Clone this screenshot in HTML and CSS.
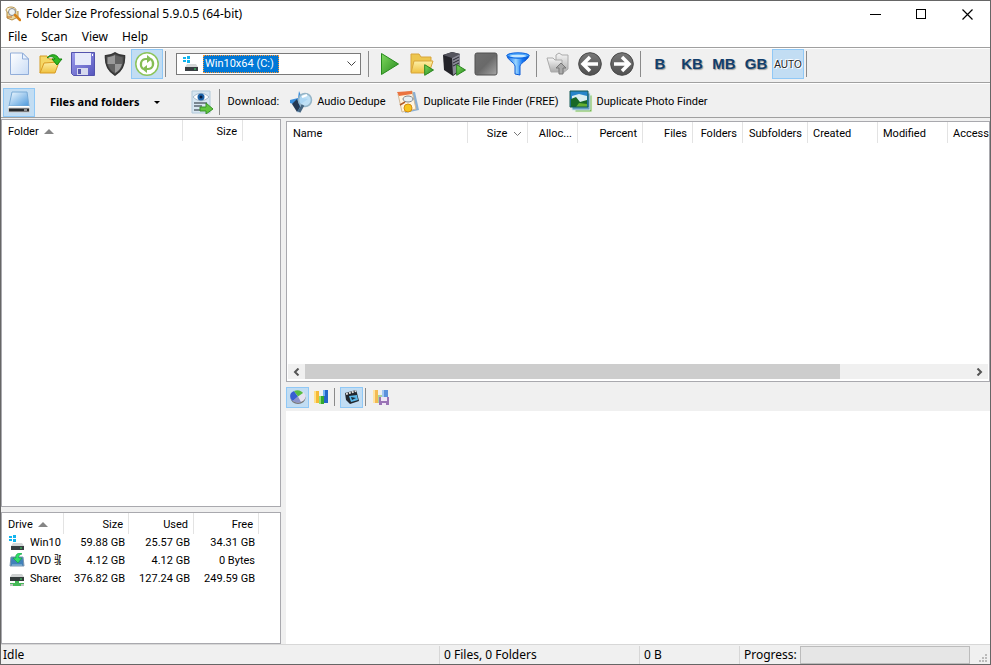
FILE: index.html
```html
<!DOCTYPE html>
<html lang="en">
<head>
<meta charset="utf-8">
<title>Folder Size Professional 5.9.0.5 (64-bit)</title>
<link rel="stylesheet" href="styles.css">
</head>
<body>
<svg class="defs" aria-hidden="true">
  <defs>
    <linearGradient id="paper" x1="0" y1="0" x2="1" y2="1"><stop offset="0" stop-color="#fff"/><stop offset="1" stop-color="#c9dcf6"/></linearGradient>
    <linearGradient id="gold" x1="0" y1="0" x2="0" y2="1"><stop offset="0" stop-color="#fdf0a8"/><stop offset="1" stop-color="#efc13f"/></linearGradient>
    <linearGradient id="green" x1="0" y1="0" x2="1" y2="1"><stop offset="0" stop-color="#7fd95f"/><stop offset="1" stop-color="#25891c"/></linearGradient>
    <linearGradient id="purple" x1="0" y1="0" x2="1" y2="1"><stop offset="0" stop-color="#9c9cec"/><stop offset="1" stop-color="#5656bd"/></linearGradient>
    <linearGradient id="blue" x1="0" y1="0" x2="1" y2="1"><stop offset="0" stop-color="#f2faff"/><stop offset="1" stop-color="#4b98dc"/></linearGradient>
    <linearGradient id="steel" x1="0" y1="0" x2="1" y2="1"><stop offset="0" stop-color="#707070"/><stop offset=".5" stop-color="#696969"/><stop offset="1" stop-color="#a6a6a6"/></linearGradient>
    <linearGradient id="funnel" x1="0" y1="0" x2="1" y2="0"><stop offset="0" stop-color="#0a66ec"/><stop offset=".4" stop-color="#9bd6ff"/><stop offset=".7" stop-color="#1678f4"/><stop offset="1" stop-color="#0848c4"/></linearGradient>
    <linearGradient id="silver" x1="0" y1="0" x2="0" y2="1"><stop offset="0" stop-color="#f7f7f7"/><stop offset="1" stop-color="#aaa"/></linearGradient>
    <linearGradient id="ball" x1="0" y1="0" x2="0" y2="1"><stop offset="0" stop-color="#777"/><stop offset="1" stop-color="#505050"/></linearGradient>
    <symbol id="drive" viewBox="0 0 16 16">
      <path d="M0 1h3v2H0zM4 0h3v3H4zM0 4h3v2H0zM4 4h3v3H4z" fill="#12b5ef"/>
      <path d="M4 8h9l2 3H2z" fill="#d5d7d8"/><path d="M2 11h13v4H2z" fill="#383e42"/><path d="M11 12.500h2v1h-2z" fill="#35df60"/>
    </symbol>
    <symbol id="play" viewBox="0 0 10 12"><path d="M.7.700 9.500 6 .7 11.300z" fill="url(#green)" stroke="#29861e"/></symbol>
  </defs>
</svg>
<div class="window">
  <header class="title-bar">
    <svg class="app-icon" viewBox="0 0 16 16"><path d="M2 5v7l5 2 6-3V5" fill="#ead8a0" stroke="#b58d43"/><ellipse cx="6" cy="4" rx="5" ry="3" fill="#fff7dc" stroke="#b7954e"/><circle cx="7" cy="6" r="3.500" fill="#eef4f5" stroke="#888"/><path d="m10 9 5 5" stroke="#d78318" stroke-width="2.500" stroke-linecap="round"/><path d="M2 11h5" stroke="#c56b20"/></svg>
    <h1>Folder Size Professional 5.9.0.5 (64-bit)</h1>
    <div class="caption-buttons">
      <button aria-label="Minimize"><svg viewBox="0 0 11 11" shape-rendering="crispEdges"><path d="M0 5.500h11" stroke="#000"/></svg></button>
      <button aria-label="Maximize"><svg viewBox="0 0 11 11" shape-rendering="crispEdges"><path d="M.5.500h9v9h-9z" fill="none" stroke="#000"/></svg></button>
      <button aria-label="Close"><svg viewBox="0 0 11 11"><path d="m.5.500 10 10m0-10-10 10" stroke="#000" stroke-width="1.200"/></svg></button>
    </div>
  </header>
  <nav class="menu"><button>File</button><button>Scan</button><button>View</button><button>Help</button></nav>

  <div class="toolbar">
    <button class="tool" aria-label="New"><svg viewBox="0 0 24 24"><path d="M3.500 1h12l6 6v15.500h-18z" fill="url(#paper)" stroke="#91add9"/><path d="M15.500 1v6h6z" fill="#e8f2ff" stroke="#91add9"/></svg></button>
    <button class="tool" aria-label="Open"><svg viewBox="0 0 24 24"><path d="M1 21V4h7l2 3h9v5" fill="#f5d765" stroke="#d59d25"/><path d="m5 11 15-1-4 11H1z" fill="url(#gold)" stroke="#d99b23"/><path d="M8 6c4-5 10-4 12 1h3l-5 6-5-6h3c-2-3-5-3-8-1z" fill="#31b923" stroke="#168510"/></svg></button>
    <button class="tool" aria-label="Save"><svg viewBox="0 0 24 24"><path d="M.5.500h23v23h-21l-2-2z" fill="url(#purple)" stroke="#5353ad"/><path d="M4 1h16v12H4z" fill="#e6eafa"/><path d="M6 16h11v7H6z" fill="#d6d9ee"/><path d="M7 17h3v5H7z" fill="#5555ad"/><path d="M21 2h1v2h-1z" fill="#fff"/></svg></button>
    <button class="tool" aria-label="Run as administrator"><svg viewBox="0 0 24 24"><path d="M12 .8c3 2 6 3 9.500 3 .5 9-2 15-9.500 19.400C4.500 18.800 2 12.800 2.500 3.800 6 3.800 9 2.800 12 .8z" fill="#4d4d4d" stroke="#363636" stroke-width="1.500"/><path d="M12 3C9 4.500 7 5 4.500 5.300V12H12zM12 12h7c-1 4-3 7-7 9z" fill="#999"/><path d="M12 3c3 1.500 5 2 7.500 2.300V12H12zM12 12H5c1 4 3 7 7 9z" fill="#626262"/></svg></button>
    <button class="tool pressed" aria-label="Refresh"><svg viewBox="0 0 24 24"><circle cx="12" cy="12" r="11.200" fill="#fff" stroke="#8cc45a" stroke-width="1.500"/><path d="M8 17c-4-4-2-10 3-10h3M16 7c4 4 2 10-3 10h-3" fill="none" stroke="#85bd55" stroke-width="2.200"/><path d="m12 3 5 4-5 4zM12 13l-5 4 5 4z" fill="#85bd55"/></svg></button>
    <span class="sep"></span>
    <div class="combo"><svg class="small-icon"><use href="#drive"/></svg><select aria-label="Drive"><option>Win10x64 (C:)</option></select><svg class="chevron" viewBox="0 0 9 6"><path d="m.5.500 4 4 4-4" fill="none" stroke="#444"/></svg></div>
    <span class="sep wide"></span>
    <button class="tool" aria-label="Scan"><svg viewBox="0 0 24 24"><path d="m3.500 1.500 17 10.500-17 10.500z" fill="url(#green)" stroke="#278a1d"/></svg></button>
    <button class="tool" aria-label="Scan folder"><svg viewBox="0 0 24 24"><path d="M1 20V2h8l2 3h10v4" fill="#edc64f" stroke="#d8a53a"/><path d="M4 9h19l-4 12H1z" fill="url(#gold)" stroke="#d8a53a"/><use href="#play" x="14" y="12" width="10" height="12"/></svg></button>
    <button class="tool" aria-label="Scan server"><svg viewBox="0 0 24 24"><path d="m1 3 9-3 8 2v17l-7 5-9-6z" fill="#24242a"/><path d="m1 3 9-3 8 2-8 4z" fill="#55555e"/><path d="m10 6 8-4v16l-7 5z" fill="#8a8a96"/><path d="m11 8 6-3M11 11l6-3M11 14l6-3" stroke="#292932"/><use href="#play" x="14" y="12" width="10" height="12"/></svg></button>
    <button class="tool" aria-label="Stop"><svg viewBox="0 0 24 24"><rect x="1" y="1" width="22" height="22" rx="2" fill="url(#steel)" stroke="#515151"/></svg></button>
    <button class="tool" aria-label="Filter"><svg viewBox="0 0 24 24"><path d="M1 3c0 5 7 7 8 11v8l5 1v-9c1-4 9-6 9-11z" fill="url(#funnel)" stroke="#0a5bd6"/><ellipse cx="12" cy="3.500" rx="11" ry="2.700" fill="#4fa7fa" stroke="#0961df"/><ellipse cx="12" cy="4" rx="8" ry="1.300" fill="#c6e7ff"/></svg></button>
    <span class="sep wide"></span>
    <button class="tool" aria-label="Up one level"><svg viewBox="0 0 24 24"><path d="M10 19V3l3-2 3 2h6v14l-5 4z" fill="url(#silver)" stroke="#aaa"/><path d="M1 6h6l2 2h7v12H5z" fill="url(#silver)" stroke="#aaa"/><path d="m15 11 5 5h-3v6h-4v-6h-3z" fill="#aaa" stroke="#777"/></svg></button>
    <button class="tool" aria-label="Back"><svg viewBox="0 0 24 24"><circle cx="12" cy="12" r="11.300" fill="url(#ball)" stroke="#484848"/><path d="M20 12H6M12 5l-7 7 7 7" fill="none" stroke="#fff" stroke-width="3.500"/></svg></button>
    <button class="tool" aria-label="Forward"><svg viewBox="0 0 24 24"><circle cx="12" cy="12" r="11.300" fill="url(#ball)" stroke="#484848"/><path d="M4 12h14M12 5l7 7-7 7" fill="none" stroke="#fff" stroke-width="3.500"/></svg></button>
    <span class="sep narrow"></span>
    <button class="tool unit">B</button><button class="tool unit">KB</button><button class="tool unit">MB</button><button class="tool unit">GB</button><button class="tool pressed auto">AUTO</button>
    <span class="sep"></span>
  </div>

  <div class="toolbar second">
    <button class="tool pressed" aria-label="Drives"><svg viewBox="0 0 24 24"><path d="M5 2h15l2 14H2z" fill="url(#blue)" stroke="#79aad5"/><path d="M2 16h20l1 2H1z" fill="#fff"/><path d="M1.500 18h21v4h-21z" fill="#26292c" stroke="#ccc"/><path d="M17 19.500h3v1h-3z" fill="#fff"/></svg></button>
    <button class="mode">Files and folders <span class="drop-arrow"></span></button>
    <button class="tool report" aria-label="Report"><svg viewBox="0 0 24 24"><path d="M3 1h18v22H3z" fill="#d7e6f1" stroke="#b1c9da"/><path d="M4 7c5-5 11-5 16 0-5 5-11 5-16 0z" fill="#fff" stroke="#a5b9ca"/><circle cx="12" cy="7" r="3.500" fill="#1c63a9"/><circle cx="12" cy="7" r="1.500" fill="#071c3e"/><path d="M5 13h13M5 16h8M5 20h7" stroke="#5b6770" stroke-width="1.500"/><path d="M11 17h6v-4l7 6-7 5v-3h-6z" fill="#61c53e" stroke="#38922a"/></svg></button>
    <span class="sep"></span>
    <span class="caption">Download:</span>
    <a class="product" href="#audio"><svg viewBox="0 0 24 24"><path d="m1 10 8-2 1-7 3 7 6 1-7 5-3 9-2-8-6-2z" fill="#3a8edc"/><path d="m3 14 5-5 3 8-3 5z" fill="#243954"/><circle cx="16" cy="10" r="6.500" fill="#b9def5" fill-opacity=".9" stroke="#95b4c6" stroke-width="1.500"/><path d="m14 15-4 7" stroke="#456580" stroke-width="3"/><path d="m13 7 5-2" stroke="#fff" stroke-width="2"/></svg>Audio Dedupe</a>
    <a class="product" href="#files"><svg viewBox="0 0 24 24"><path d="m6 3 13-1 4 18-14 3z" fill="#8aafd2"/><path d="m2 4 14-3 4 18-14 3z" fill="#fff4df" stroke="#d1b998"/><path d="m1 2 15-1v3L3 6z" fill="#ea733f"/><ellipse cx="12" cy="9" rx="5" ry="3" fill="#e7f0f5" stroke="#7e858d"/><path d="m9 12-5 3" stroke="#b15b29" stroke-width="1.500"/><circle cx="12" cy="18" r="4" fill="#f6c51e" stroke="#d58c0d"/></svg>Duplicate File Finder (FREE)</a>
    <a class="product" href="#photos"><svg viewBox="0 0 24 24"><path d="M6 5h17v17H6z" fill="#76b850" stroke="#e8f4e3"/><path d="M3 3h18v17H3z" fill="#5e9cc0" stroke="#d5e8ed"/><path d="M1 1h18v16H1z" fill="#2785ca"/><path d="m3 6 7-2 8 2v6H3z" fill="#d9edf0"/><path d="m2 9 5-2 4 5 7-2v7H2z" fill="#196827"/><path d="m7 17 3-4 8 1v3z" fill="#64af30"/><path d="M1 1h18v16H1z" fill="none" stroke="#155b55"/></svg>Duplicate Photo Finder</a>
  </div>

  <main>
    <div class="left">
      <section class="panel folders" aria-label="Folders">
        <table class="folder-table"><colgroup><col class="w181"><col class="w60"><col></colgroup><thead><tr><th>Folder <span class="sort-up"></span></th><th class="num">Size</th><td></td></tr></thead></table>
      </section>
      <section class="panel drives" aria-label="Drives">
        <table class="drive-table"><colgroup><col class="w62"><col class="w65"><col class="w65"><col class="w65"><col></colgroup>
          <thead><tr><th>Drive <span class="sort-up"></span></th><th class="num">Size</th><th class="num">Used</th><th class="num">Free</th><td></td></tr></thead>
          <tbody>
            <tr><td><div class="drive-name"><svg class="small-icon"><use href="#drive"/></svg><span>Win10</span></div></td><td>59.88 GB</td><td>25.57 GB</td><td>34.31 GB</td><td></td></tr>
            <tr><td><div class="drive-name"><svg class="small-icon" viewBox="0 0 16 16"><path d="M2 4h12l1 9H1z" fill="#4281ba" stroke="#7c96b0"/><path d="M3 12h10" stroke="#9bc5df"/><path d="M12 0C8 0 6 2 7 5H4l5 5 4-5h-3c-1-2 0-3 3-4z" fill="#31df6a" stroke="#129e42" stroke-width=".6"/></svg><span>DVD 驱</span></div></td><td>4.12 GB</td><td>4.12 GB</td><td>0 Bytes</td><td></td></tr>
            <tr><td><div class="drive-name"><svg class="small-icon" viewBox="0 0 16 16"><path d="M3 3h10l2 3H1z" fill="#cfd2d2"/><path d="M1 6h14v4H1z" fill="#343c3c"/><path d="M11 7.500h2v1h-2z" fill="#42dd68"/><path d="M6 10h4v2h5v3H1v-3h5z" fill="#46b957"/><path d="M1 13h3v2H1zM12 13h3v2h-3z" fill="#bdc4bf"/></svg><span>Shared</span></div></td><td>376.82 GB</td><td>127.24 GB</td><td>249.59 GB</td><td></td></tr>
          </tbody></table>
      </section>
    </div>
    <div class="right">
      <section class="panel files" aria-label="Files">
        <div class="table-view"><table class="file-table"><colgroup><col class="w181"><col class="w60"><col class="w50"><col class="w65"><col class="w50"><col class="w50"><col class="w65"><col class="w70"><col class="w70"><col class="w70"></colgroup><thead><tr><th>Name</th><th class="num">Size <svg class="sort-down" viewBox="0 0 9 6"><path d="m1 1 3.500 3.500L8 1" fill="none" stroke="#777"/></svg></th><th class="num">Alloc...</th><th class="num">Percent</th><th class="num">Files</th><th class="num">Folders</th><th class="num">Subfolders</th><th>Created</th><th>Modified</th><th>Accessed</th></tr></thead></table></div>
        <div class="scrollbar"><button aria-label="Scroll left"><svg viewBox="0 0 7 8"><path d="M5.500.500 2 4l3.500 3.500" fill="none" stroke="#555" stroke-width="2"/></svg></button><div class="track"><div class="thumb"></div></div><button aria-label="Scroll right"><svg viewBox="0 0 7 8"><path d="M1.500.500 5 4 1.500 7.500" fill="none" stroke="#555" stroke-width="2"/></svg></button></div>
      </section>
      <div class="chart-bar">
        <button class="mini pressed" aria-label="Pie chart"><svg viewBox="0 0 16 16"><ellipse cx="8" cy="9" rx="7.500" ry="6" fill="#777"/><ellipse cx="8" cy="7.500" rx="7.500" ry="6" fill="#e6e2f0"/><path d="M8 7.500 3 12C-1 9-1 4 4 2z" fill="#375fd1"/><path d="M8 7.500 4 2c4-2 8 0 9 2z" fill="#55bd42"/><path d="m8 7.500-5 4.500c2 2 6 2 8 1z" fill="#8c94c8"/></svg></button>
        <button class="mini" aria-label="Bar chart"><svg viewBox="0 0 16 16"><path d="M1 2h5v12H1z" fill="#f5ba36"/><path d="M1 2h2v12H1z" fill="#ffe08a"/><path d="M6 7h5v8H6z" fill="#35a830"/><path d="M6 7h2v8H6z" fill="#91df72"/><path d="M10 1h5v13h-4V7h-1z" fill="#2365c8"/><path d="M10 1h2v6h-2z" fill="#70b1f5"/></svg></button>
        <span class="sep wide"></span>
        <button class="mini pressed" aria-label="Animate"><svg viewBox="0 0 16 16"><path d="m1 4 11-3 1 3 2 8-9 3-4-4z" fill="#22272e"/><path d="m2 5 10-3" stroke="#ddd" stroke-width="2" stroke-dasharray="2 1"/><path d="m5 7 8-1 1 5-7 2z" fill="#5bb8e9"/><path d="m7 8 5 1-4 2z" fill="#182838"/></svg></button>
        <span class="sep narrow"></span>
        <button class="mini" aria-label="Save chart"><svg viewBox="0 0 16 16"><path d="M0 1h5v13H0z" fill="#f3bb54"/><path d="M0 1h2v13H0z" fill="#ffe4a2"/><path d="M5 6h4v8H5z" fill="#aad49a"/><path d="M9 1h6v8H9z" fill="#5d92db"/><path d="M9 1h2v8H9z" fill="#a4c8f2"/><path d="M6 8h10v8H6z" fill="#9a73b5"/><path d="M8 8h6v4H8zM9 14h4v2H9z" fill="#f0e7f5"/></svg></button>
      </div>
      <section class="chart" aria-label="Chart"></section>
    </div>
  </main>
  <footer class="status"><span class="state">Idle</span><span class="count">0 Files, 0 Folders</span><span class="bytes">0 B</span><div class="progress"><label for="scan-progress">Progress:</label><progress id="scan-progress" value="0" max="100"></progress><svg class="grip" viewBox="0 0 9 9" shape-rendering="crispEdges"><path d="M6 0h2v2H6zM3 3h2v2H3zM6 3h2v2H6zM0 6h2v2H0zM3 6h2v2H3zM6 6h2v2H6z" fill="#bbb"/></svg></div></footer>
</div>
</body>
</html>
```
FILE: styles.css
```css
* { box-sizing: border-box; }
body { margin: 0; color: #000; background: #f0f0f0; font: 11px/14px Roboto, "Noto Sans CJK SC", sans-serif; }
button, select { margin: 0; padding: 0; border: 0; background: none; color: inherit; font: inherit; }
svg { display: block; flex: none; }
.defs { position: absolute; width: 0; height: 0; }

.window { height: 100vh; display: flex; flex-direction: column; border: 1px solid #666; background: #f0f0f0; }
.title-bar { display: flex; align-items: center; height: 26px; padding-left: 4px; background: #fff; flex: none; }
.app-icon { width: 16px; height: 16px; }
h1 { margin: 0 0 0 5px; font: 12px/18px "Noto Sans", sans-serif; }
.caption-buttons { display: flex; margin-left: auto; }
.caption-buttons button { width: 46px; height: 24px; display: grid; place-items: center; }
.caption-buttons svg { width: 11px; height: 11px; }
.menu { display: flex; height: 20px; background: #fff; flex: none; font: 12px/18px "Noto Sans", sans-serif; gap: 14px; padding-left: 7px; }

.toolbar { display: flex; align-items: center; flex: none; height: 35px; padding: 0 0 2px 2px; border-top: 1px solid #a0a0a0; box-shadow: inset 0 1px #fff; }
.second { height: 36px; padding: 4px 0 0 2px; border-bottom: 1px solid #a0a0a0; }
.tool { width: 32px; height: 30px; display: grid; place-items: center; flex: none; border: 1px solid transparent; }
.tool svg { width: 24px; height: 24px; }
.pressed { background: #c2ddf3; border: 1px solid #90c8f6; }
.second .pressed { height: 29px; }
.sep { width: 7px; height: 26px; flex: none; display: flex; padding-left: 2px; }
.sep.wide { width: 8px; }
.sep.narrow { width: 6px; }
.sep::before { content: ""; width: 1px; background: #8a8a8a; }
.combo { display: flex; align-items: center; width: 185px; height: 22px; margin: 0 5px 0 6px; padding: 0 4px 0 6px; background: #fff; border: 1px solid #7a7a7a; }
.small-icon { width: 16px; height: 16px; }
select { appearance: none; width: 76px; height: 18px; margin-left: 4px; padding-left: 1px; background: #0078d7; color: #fff; border: 1px dotted #ff9430; border-radius: 0; }
.chevron { width: 9px; height: 6px; margin-left: auto; }
.unit { color: #123e6c; font: bold 15px/20px "Liberation Sans", sans-serif; text-shadow: 1px 1px 1px #999; }
.auto { color: #222; padding-top: 2px; font: 10px/14px "Liberation Sans", sans-serif; text-shadow: 0 0 1px #fff, 1px 1px #fff, -1px -1px #fff; }

.mode { display: flex; align-items: center; font: bold 11px/14px "Noto Sans", sans-serif; margin-left: 15px; gap: 15px; }
.drop-arrow { border: 3px solid transparent; border-top-color: #000; border-bottom: 0; }
.report { margin-left: 25px; }
.caption { margin-left: 3px; }
.product { display: flex; align-items: center; gap: 4px; margin-left: 10px; color: #000; text-decoration: none; }
.product svg { width: 24px; height: 24px; }

main { flex: 1; min-height: 0; display: grid; grid-template-columns: 280px 1fr; gap: 5px; padding-top: 1px; }
.left, .right { display: flex; flex-direction: column; min-width: 0; min-height: 0; }
.left { gap: 5px; }
.panel { background: #fff; border: 1px solid #a9a9ae; overflow: hidden; }
.folders { flex: 1; }
.drives { flex: 0 0 132px; }
.right { padding-top: 2px; }
.files { flex: 260 1 0; display: flex; flex-direction: column; }
.table-view { flex: 1; overflow: hidden; }
table { table-layout: fixed; border-collapse: separate; border-spacing: 0; width: 100%; }
.file-table { width: 731px; }
.w50 { width: 50px; } .w60 { width: 60px; } .w62 { width: 62px; } .w65 { width: 65px; } .w70 { width: 70px; } .w181 { width: 181px; }
th, td { padding: 0 5px; font-weight: 400; text-align: left; white-space: nowrap; }
th { height: 21px; padding-top: 3px; border-right: 1px solid #e3e3e3; }
th:first-child { padding-left: 6px; }
.num { text-align: right; }
.sort-up { display: inline-block; margin-left: 3px; border: 5px solid transparent; border-top: 0; border-bottom-color: #858585; vertical-align: 1px; }
.sort-down { display: inline-block; width: 9px; height: 6px; margin-left: 3px; }
tbody td { height: 18px; padding: 0 4px; text-align: right; }
tbody td:first-child { padding: 0 3px; text-align: left; }
.drive-name { display: flex; align-items: center; gap: 5px; padding-left: 4px; overflow: hidden; }
.drive-name span { overflow: hidden; }
.scrollbar { display: flex; height: 17px; padding: 0 1px 2px; flex: none; }
.scrollbar button { width: 17px; height: 15px; display: grid; place-items: center; background: #f0f0f0; flex: none; }
.scrollbar svg { width: 7px; height: 8px; }
.track { flex: 1; background: #f0f0f0; }
.thumb { width: 80.4%; height: 100%; background: #cdcdcd; }
.chart-bar { display: flex; align-items: center; height: 29px; flex: none; padding-top: 1px; }
.mini { width: 23px; height: 21px; display: grid; place-items: center; border: 1px solid transparent; flex: none; }
.mini.pressed { border-color: #90c8f6; }
.mini svg { width: 16px; height: 16px; }
.chart-bar .sep { height: 18px; }
.chart { flex: 233 1 0; background: #fff; }

.status { display: flex; align-items: center; height: 20px; flex: none; border-top: 1px solid #d7d7d7; font: 12px/18px "Noto Sans", sans-serif; padding-left: 2px; }
.state { flex: 1; }
.count, .bytes, .progress { padding-left: 4px; border-left: 1px solid #d7d7d7; height: 18px; }
.count { width: 200px; }
.bytes { width: 100px; }
.progress { display: flex; align-items: center; width: 251px; }
progress { appearance: none; flex: 1; min-width: 0; height: 18px; margin-left: 3px; border: 1px solid #bcbcbc; background: #e6e6e6; }
progress::-webkit-progress-bar { background: #e6e6e6; }
progress::-webkit-progress-value { background: #06b025; }
.grip { width: 9px; height: 9px; margin: 8px 2px 0 9px; }
```
